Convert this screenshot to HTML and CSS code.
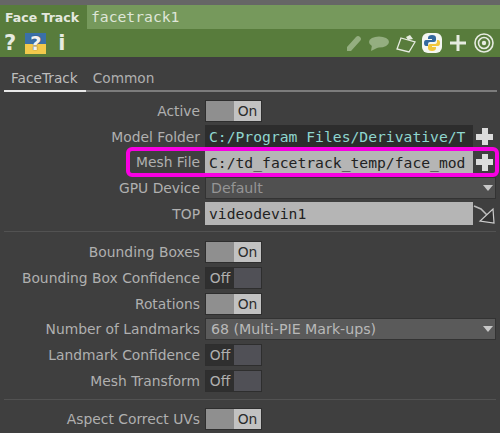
FILE: index.html
```html
<!DOCTYPE html>
<html lang="en">
<head>
  <meta charset="UTF-8" />
  <title>Face Track</title>
  <link rel="stylesheet" href="styles.css">
</head>
<body>
  <div class="header">
    <div class="title-row">
      <span class="op-type">Face Track</span>
      <span class="op-name">facetrack1</span>
    </div>
    <div class="icon-row">
      <span class="help">?</span>
      <span class="py-help">?</span>
      <span class="info">i</span>
      <span class="spacer"></span>
      <svg class="pencil" width="16" height="17" viewBox="0 0 16 17">
        <path d="M1 12 L10 2 Q12 0 14 2 Q16 4 14 6 L5 16 L1 16 Z" fill="#94ae80"/>
      </svg>
      <svg class="chat" width="20" height="15" viewBox="0 0 20 15">
        <ellipse cx="10" cy="6" rx="10" ry="5.500" fill="#94ae80"/>
        <path d="M3 9 L2 15 L10 11 Z" fill="#94ae80"/>
      </svg>
      <svg class="clip" width="20" height="19" viewBox="0 0 20 19">
        <path d="M5 4 L19 8 L13 18 L1 15 Z" fill="none" stroke="#e6ebe1" stroke-width="1.300"/>
        <path d="M10 3 L14 1 L17 5 L12 6 Z" fill="#e6ebe1"/>
      </svg>
      <svg class="py" width="20" height="20" viewBox="0 0 20 20">
        <rect width="20" height="20" rx="6" fill="#f4f6f2"/>
        <path d="M10 2 Q6 2 6 5 L6 6 L10 6 L10 7 L4 7 Q2 7 2 10 Q2 13 4 13 L6 13 L6 11 Q6 9 8 9 L12 9 Q14 9 14 7 L14 5 Q14 2 10 2 Z" fill="#33689e"/>
        <path d="M10 18 Q14 18 14 15 L14 14 L10 14 L10 13 L16 13 Q18 13 18 10 Q18 7 16 7 L15 7 L15 9 Q15 11 12 11 L8 11 Q6 11 6 13 L6 15 Q6 18 10 18 Z" fill="#f2c73c"/>
      </svg>
      <svg class="add" width="16" height="16" viewBox="0 0 16 16">
        <path d="M6.500 0 H9.500 V6.500 H16 V9.500 H9.500 V16 H6.500 V9.500 H0 V6.500 H6.500 Z" fill="#e6ebe1"/>
      </svg>
      <svg class="target" width="20" height="20" viewBox="0 0 20 20">
        <circle cx="10" cy="10" r="9" fill="none" stroke="#e6ebe1" stroke-width="1.600"/>
        <circle cx="10" cy="10" r="5.500" fill="none" stroke="#e6ebe1" stroke-width="1.600"/>
        <circle cx="10" cy="10" r="2.200" fill="#e6ebe1"/>
      </svg>
    </div>
  </div>

  <div class="tabs">
    <span class="tab active">FaceTrack</span>
    <span class="tab">Common</span>
  </div>

  <div class="params">
    <div class="row"><label>Active</label><div class="toggle on"><i></i><b>On</b></div></div>
    <div class="row"><label>Model Folder</label><div class="field dark">C:/Program Files/Derivative/T</div><span class="plus"></span></div>
    <div class="row"><label>Mesh File</label><div class="field">C:/td_facetrack_temp/face_mod</div><span class="plus"></span></div>
    <div class="row"><label>GPU Device</label><div class="menu dim">Default<span class="arrow"></span></div></div>
    <div class="row"><label>TOP</label><div class="field">videodevin1</div>
      <svg class="drop" width="24" height="22" viewBox="0 0 24 22">
        <path d="M1 2 L8 5 L14 11" fill="none" stroke="#bbb" stroke-width="1.500"/>
        <path d="M20 5 L21 19 L7 17 Z" fill="#333" stroke="#ccc" stroke-width="1.200"/>
      </svg>
    </div>
    <hr class="sep first">
    <div class="row"><label>Bounding Boxes</label><div class="toggle on"><i></i><b>On</b></div></div>
    <div class="row"><label>Bounding Box Confidence</label><div class="toggle off"><b>Off</b><i></i></div></div>
    <div class="row"><label>Rotations</label><div class="toggle on"><i></i><b>On</b></div></div>
    <div class="row"><label>Number of Landmarks</label><div class="menu">68 (Multi-PIE Mark-ups)<span class="arrow"></span></div></div>
    <div class="row"><label>Landmark Confidence</label><div class="toggle off"><b>Off</b><i></i></div></div>
    <div class="row"><label>Mesh Transform</label><div class="toggle off"><b>Off</b><i></i></div></div>
    <hr class="sep second">
    <div class="row"><label>Aspect Correct UVs</label><div class="toggle on"><i></i><b>On</b></div></div>
  </div>

  <div class="highlight"></div>
</body>
</html>
```

FILE: styles.css
```css
html, body {
  margin: 0;
  height: 433px;
  overflow: hidden;
}

body {
  position: relative;
  background-color: #3f3f3f;
  color: #b0b0b0;
  font-family: "DejaVu Sans", sans-serif;
  font-size: 13.850px;
  border-top: 5px solid #666;
  box-sizing: border-box;
}

.header {
  background-color: #587c3c;
  height: 52px;
}

.title-row {
  display: flex;
  height: 24px;
  align-items: center;
}

.op-type {
  width: 87px;
  padding-left: 5px;
  box-sizing: border-box;
  color: #e4e8df;
  font-weight: bold;
  font-size: 12.500px;
  white-space: nowrap;
}

.op-name {
  flex: 1;
  height: 24px;
  line-height: 24px;
  padding-left: 4px;
  background-color: #76995c;
  color: #dfe6d8;
  font-family: "DejaVu Sans Mono", monospace;
  font-size: 14.700px;
}

.icon-row {
  display: flex;
  align-items: center;
  height: 28px;
  padding-right: 6px;
}

.help, .info {
  color: #e6ebe1;
  font-weight: bold;
  font-size: 21px;
}

.help {
  margin-left: 4px;
}

.py-help {
  width: 21px;
  height: 21px;
  margin-left: 9px;
  background: linear-gradient(#3a70a8 50%, #f2c94c 50%);
  color: #f2f2f2;
  font-weight: bold;
  font-size: 20px;
  line-height: 21px;
  text-align: center;
  text-shadow: 0 0 1px #223;
}

.info {
  margin-left: 12px;
}

.spacer {
  flex: 1;
}

.chat, .clip {
  margin-left: 7px;
}

.py {
  margin-left: 6px;
}

.add, .target {
  margin-left: 8px;
}

.tabs {
  display: flex;
  height: 27px;
  margin: 8px 3px 0 4px;
  border-bottom: 2px solid #7c7c7c;
  box-sizing: border-box;
  font-size: 13.700px;
}

.tab {
  padding: 4px 7px 0;
  line-height: 18px;
  color: #b0b0b0;
}

.tab.active {
  margin-bottom: -2px;
  padding-right: 8px;
  border-bottom: 2px solid #e8e8e8;
  color: #bdbdbd;
}

.params {
  padding-top: 6px;
}

.row {
  display: flex;
  align-items: center;
  height: 25.700px;
}

.row label {
  width: 200px;
  margin-right: 5px;
  flex: none;
  text-align: right;
  white-space: nowrap;
}

.toggle {
  display: flex;
  width: 57px;
  height: 22px;
  line-height: 21px;
  box-sizing: border-box;
  border: 1px solid #2e2e2e;
}

.toggle i {
  display: block;
}

.toggle b {
  font-weight: normal;
  text-align: center;
}

.toggle.on i {
  width: 28px;
  background-color: #8f8f8f;
}

.toggle.on b {
  flex: 1;
  background-color: #c2c2c2;
  color: #2c2c2c;
}

.toggle.off b {
  width: 28px;
  background-color: #2f2f2f;
  color: #b0b0b0;
}

.toggle.off i {
  flex: 1;
  background-color: #505056;
}

.field {
  width: 268px;
  height: 23px;
  line-height: 23px;
  padding-left: 4px;
  box-sizing: border-box;
  overflow: hidden;
  background-color: #b5b5b5;
  color: #222;
  font-family: "DejaVu Sans Mono", monospace;
  font-size: 14.700px;
  white-space: nowrap;
}

.field.dark {
  background-color: #2d2d2d;
  color: #8fd6cf;
}

.plus {
  width: 17px;
  height: 17px;
  margin-left: 3px;
  background:
    linear-gradient(#dcdcdc, #dcdcdc) center / 17px 6px no-repeat,
    linear-gradient(#dcdcdc, #dcdcdc) center / 6px 17px no-repeat;
}

.drop {
  margin-top: 2px;
}

.menu {
  position: relative;
  width: 291px;
  height: 22px;
  line-height: 21px;
  padding-left: 5px;
  box-sizing: border-box;
  background-color: #5a5a5a;
  border: 1px solid #333;
  color: #b8b8b8;
  font-size: 14.200px;
}

.menu.dim {
  background-color: #505050;
  color: #959595;
}

.arrow {
  position: absolute;
  right: 2px;
  top: 7px;
  border-left: 5.500px solid transparent;
  border-right: 5.500px solid transparent;
  border-top: 6px solid #c8c8c8;
}

.sep {
  height: 1px;
  margin: 5px 4px 7px;
  border: 0;
  background-color: #525252;
}

/* magenta callout around the Mesh File row */
.highlight {
  position: absolute;
  left: 126px;
  top: 142px;
  width: 365px;
  height: 22px;
  border: 4px solid #f800e2;
  border-radius: 6px;
}
```
